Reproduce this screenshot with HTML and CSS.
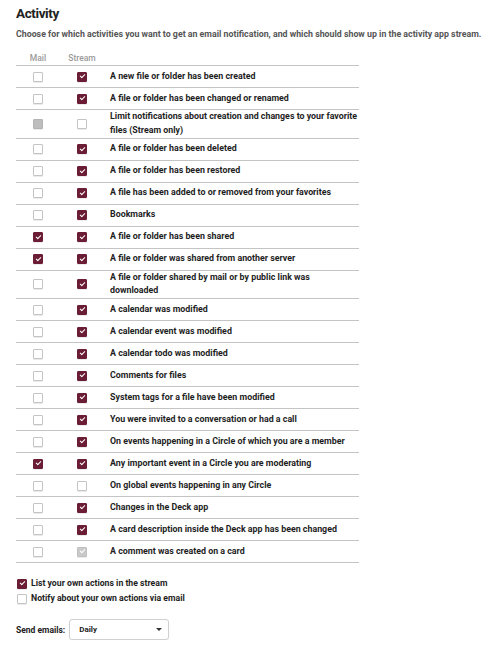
FILE: index.html
```html
<!DOCTYPE html>
<html lang="en">
<head>
<meta charset="utf-8">
<title>Activity</title>
<link rel="stylesheet" href="styles.css">
</head>
<body>
<div class="page">
  <h2 class="title">Activity</h2>
  <p class="desc">Choose for which activities you want to get an email notification, and which should show up in the activity app stream.</p>

  <div class="grid">
    <div class="row head">
      <div class="col">Mail</div>
      <div class="col">Stream</div>
      <div></div>
    </div>
    <div class="row"><div class="col"><span class="cb"></span></div><div class="col"><span class="cb on"></span></div><div class="txt">A new file or folder has been created</div></div>
    <div class="row"><div class="col"><span class="cb"></span></div><div class="col"><span class="cb on"></span></div><div class="txt">A file or folder has been changed or renamed</div></div>
    <div class="row"><div class="col"><span class="cb dis"></span></div><div class="col"><span class="cb"></span></div><div class="txt">Limit notifications about creation and changes to your favorite files (Stream only)</div></div>
    <div class="row"><div class="col"><span class="cb"></span></div><div class="col"><span class="cb on"></span></div><div class="txt">A file or folder has been deleted</div></div>
    <div class="row"><div class="col"><span class="cb"></span></div><div class="col"><span class="cb on"></span></div><div class="txt">A file or folder has been restored</div></div>
    <div class="row"><div class="col"><span class="cb"></span></div><div class="col"><span class="cb on"></span></div><div class="txt">A file has been added to or removed from your favorites</div></div>
    <div class="row"><div class="col"><span class="cb"></span></div><div class="col"><span class="cb on"></span></div><div class="txt">Bookmarks</div></div>
    <div class="row"><div class="col"><span class="cb on"></span></div><div class="col"><span class="cb on"></span></div><div class="txt">A file or folder has been shared</div></div>
    <div class="row"><div class="col"><span class="cb on"></span></div><div class="col"><span class="cb on"></span></div><div class="txt">A file or folder was shared from another server</div></div>
    <div class="row"><div class="col"><span class="cb"></span></div><div class="col"><span class="cb on"></span></div><div class="txt">A file or folder shared by mail or by public link was downloaded</div></div>
    <div class="row"><div class="col"><span class="cb"></span></div><div class="col"><span class="cb on"></span></div><div class="txt">A calendar was modified</div></div>
    <div class="row"><div class="col"><span class="cb"></span></div><div class="col"><span class="cb on"></span></div><div class="txt">A calendar event was modified</div></div>
    <div class="row"><div class="col"><span class="cb"></span></div><div class="col"><span class="cb on"></span></div><div class="txt">A calendar todo was modified</div></div>
    <div class="row"><div class="col"><span class="cb"></span></div><div class="col"><span class="cb on"></span></div><div class="txt">Comments for files</div></div>
    <div class="row"><div class="col"><span class="cb"></span></div><div class="col"><span class="cb on"></span></div><div class="txt">System tags for a file have been modified</div></div>
    <div class="row"><div class="col"><span class="cb"></span></div><div class="col"><span class="cb on"></span></div><div class="txt">You were invited to a conversation or had a call</div></div>
    <div class="row"><div class="col"><span class="cb"></span></div><div class="col"><span class="cb on"></span></div><div class="txt">On events happening in a Circle of which you are a member</div></div>
    <div class="row"><div class="col"><span class="cb on"></span></div><div class="col"><span class="cb on"></span></div><div class="txt">Any important event in a Circle you are moderating</div></div>
    <div class="row"><div class="col"><span class="cb"></span></div><div class="col"><span class="cb"></span></div><div class="txt">On global events happening in any Circle</div></div>
    <div class="row"><div class="col"><span class="cb"></span></div><div class="col"><span class="cb on"></span></div><div class="txt">Changes in the Deck app</div></div>
    <div class="row"><div class="col"><span class="cb"></span></div><div class="col"><span class="cb on"></span></div><div class="txt">A card description inside the Deck app has been changed</div></div>
    <div class="row"><div class="col"><span class="cb"></span></div><div class="col"><span class="cb on dis"></span></div><div class="txt">A comment was created on a card</div></div>
  </div>

  <div class="opts">
    <label class="opt"><span class="cb on"></span>List your own actions in the stream</label>
    <label class="opt"><span class="cb"></span>Notify about your own actions via email</label>
  </div>

  <div class="send">
    <span class="send-label">Send emails:</span>
    <div class="select"><span>Daily</span><span class="caret"></span></div>
  </div>
</div>
</body>
</html>
```

FILE: styles.css
```css
html, body {
  margin: 0;
  padding: 0;
  background: #fff;
}
body {
  font-family: Roboto, "Liberation Sans", sans-serif;
  color: #222;
}
.page {
  padding: 3px 16px 0 16px;
}
.title {
  margin: 0;
  font-size: 13.5px;
  letter-spacing: -0.4px;
  line-height: 20px;
  font-weight: 700;
  color: #222;
}
.desc {
  margin: 5px 0 0 0;
  font-size: 8.8px;
  line-height: 12px;
  font-weight: 700;
  color: #555;
  white-space: nowrap;
}
.grid {
  width: 343px;
  margin-top: 12px;
}
.row {
  display: grid;
  grid-template-columns: 44px 44px 1fr;
  align-items: center;
  border-bottom: 1px solid #c4c4c4;
  min-height: 21px;
}
.row.head {
  min-height: 13px;
  align-items: end;
  font-size: 8.5px;
  line-height: 13px;
  color: #9a9a9a;
  font-weight: 500;
}
.col {
  display: flex;
  justify-content: center;
}
.txt {
  padding-left: 6px;
  font-size: 8.85px;
  line-height: 13.8px;
  font-weight: 700;
  color: #1e1e1e;
}
.cb {
  position: relative;
  display: inline-block;
  box-sizing: border-box;
  width: 10px;
  height: 10px;
  border: 1px solid #c4c4c4;
  border-radius: 1px;
  background: #fff;
  box-shadow: 0 1px 0 rgba(0, 0, 0, 0.08);
}
.cb.on {
  background: #6b1d35;
  border-color: #6b1d35;
}
.cb.on::after {
  content: "";
  position: absolute;
  left: 2px;
  top: 1.6px;
  width: 4px;
  height: 2px;
  border-left: 1.4px solid #fff;
  border-bottom: 1.4px solid #fff;
  transform: rotate(-45deg);
}
.cb.dis {
  background: #bdbdbd;
  border-color: #b3b3b3;
}
.cb.on.dis {
  background: #c9c9c9;
  border-color: #c0c0c0;
}
.opts {
  margin-top: 13px;
  display: flex;
  flex-direction: column;
}
.opt {
  display: flex;
  align-items: center;
  gap: 4px;
  padding-left: 1px;
  font-size: 8.7px;
  line-height: 15px;
  font-weight: 700;
  color: #1e1e1e;
}
.send {
  margin-top: 13px;
  display: flex;
  align-items: center;
  gap: 4px;
}
.send-label {
  font-size: 8.5px;
  font-weight: 700;
  color: #222;
}
.select {
  box-sizing: border-box;
  width: 100px;
  height: 21px;
  border: 1px solid #d0d0d0;
  border-radius: 3px;
  box-shadow: 0 1px 1px rgba(0, 0, 0, 0.08);
  display: flex;
  align-items: center;
  justify-content: space-between;
  padding: 0 6px 0 9px;
  font-size: 8px;
  font-weight: 700;
  color: #222;
}
.caret {
  width: 0;
  height: 0;
  border-left: 3px solid transparent;
  border-right: 3px solid transparent;
  border-top: 3px solid #333;
}
```
